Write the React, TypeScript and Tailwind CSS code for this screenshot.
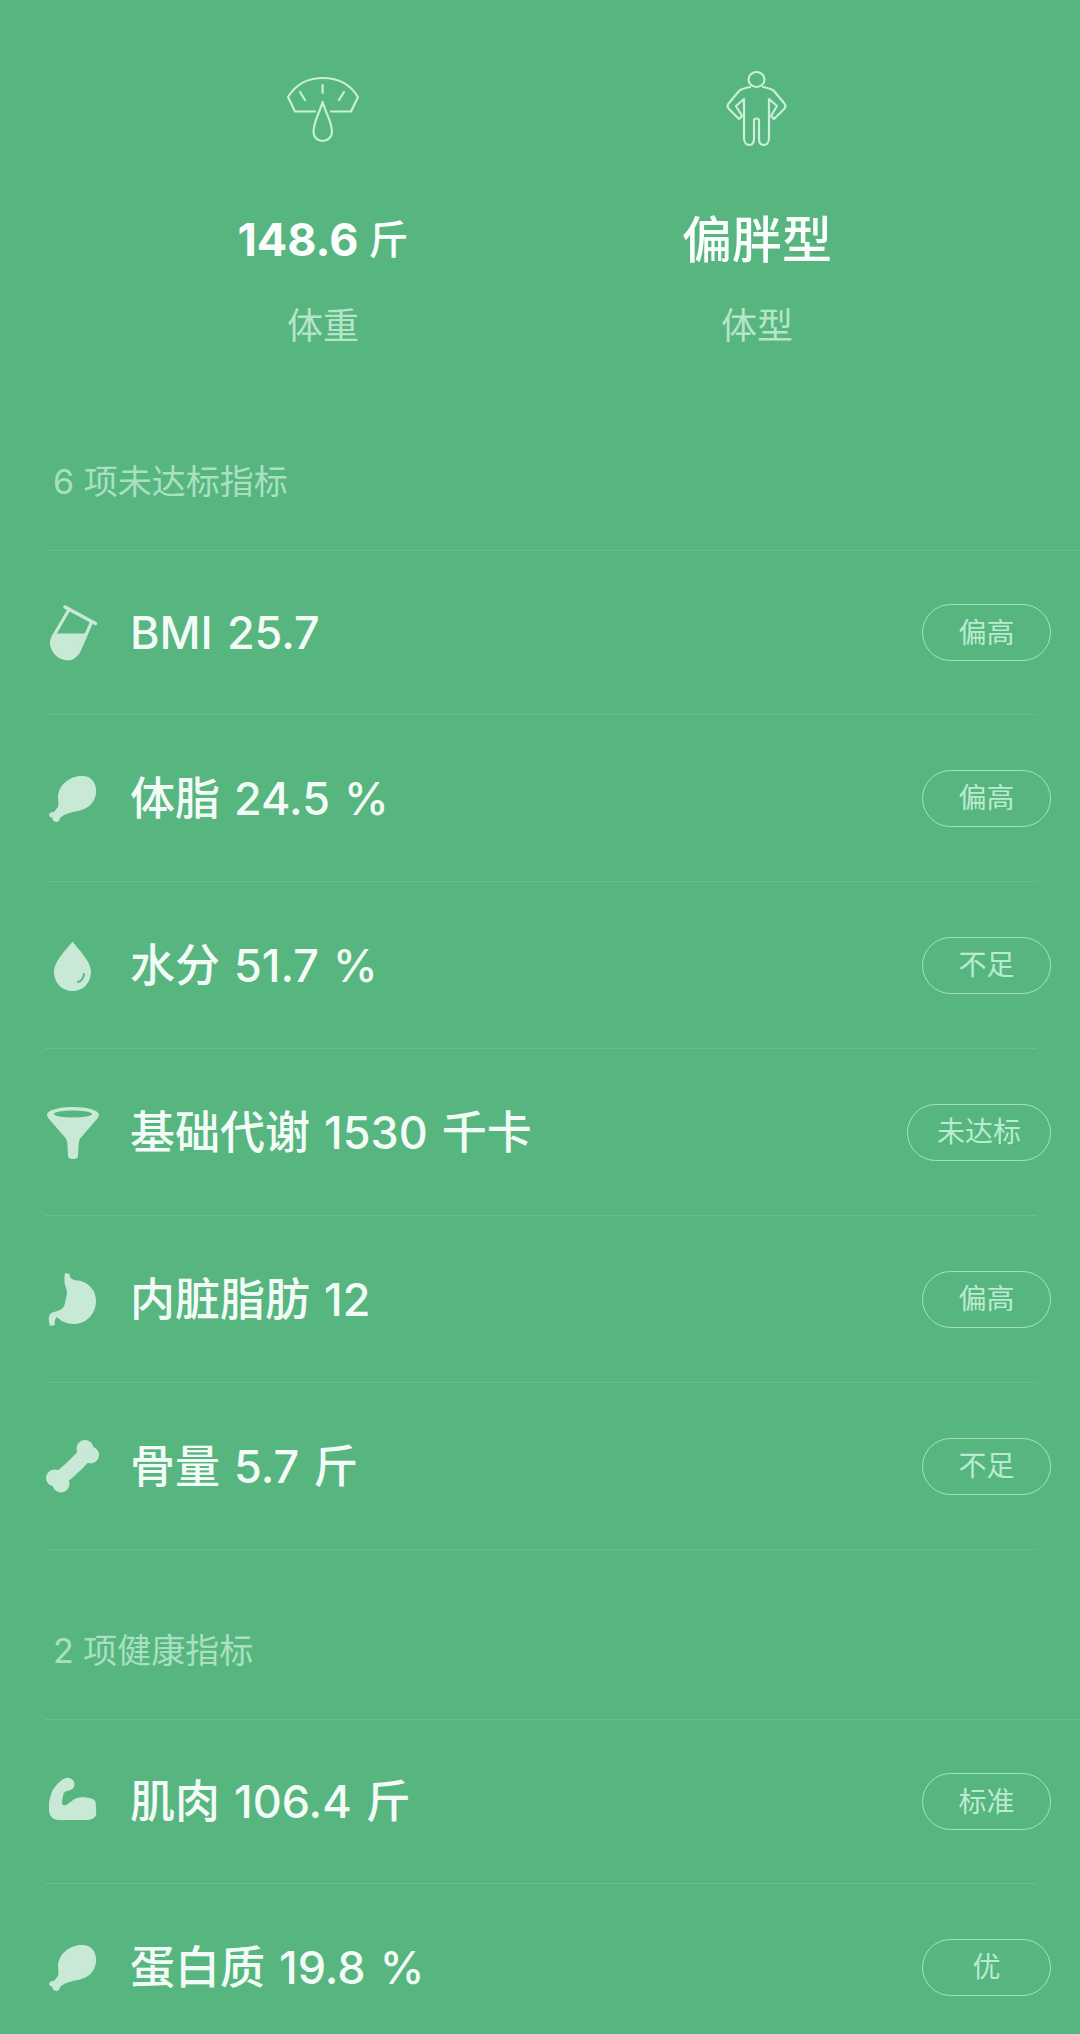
import type { ReactNode } from "react";

const iconClass = "w-[60px] h-[60px] flex-shrink-0";
const fill = "#c9e9d7";
const bg = "#57b57f";

const TubeIcon = () => (
  <svg viewBox="0 0 60 60" className={iconClass}>
    <path d="M20 4L50.5 20.5" stroke={fill} strokeWidth="3.5" strokeLinecap="round" />
    <path d="M24 6.5L8 34C4 42 9 53 20 55.5C27 57 32 52 34 48L47 18" fill="none" stroke={fill} strokeWidth="3.2" />
    <path d="M12 30.5H40.5L33 47C30 53 25 56 19 55C9 53 4 43 8 35Z" fill={fill} />
  </svg>
);

const DrumstickIcon = () => (
  <svg viewBox="0 0 60 60" className={iconClass}>
    <path
      d="M36 8C46 7 52 15 51 25C50 35 43 41 33 43C27 44 23 45 19 47L15 50C15 53 12 55 10 53.5C8 53 7 51 7.5 49.5C5 50 3 47 5 45C6 44 8 44 9 44L13 39C14 36 13 32 13 28C14 17 25 8 36 8Z"
      fill={fill}
    />
  </svg>
);

const DropIcon = () => (
  <svg viewBox="0 0 60 60" className={iconClass}>
    <path d="M27.5 6.5C33 14 46 26 46 37C46 48 38 56 27.5 56C17 56 9 48 9 37C9 26 22 14 27.5 6.5Z" fill={fill} />
    <path d="M39 39C38.5 43 36.5 46 33 47" fill="none" stroke={bg} strokeWidth="2" strokeLinecap="round" />
  </svg>
);

const FunnelIcon = () => (
  <svg viewBox="0 0 60 60" className={iconClass}>
    <path d="M2 13C2 8 14 5 28 5C42 5 54 8 54 13C54 14 53 15 52 17L35.5 36C34 38 33.5 41 33.5 44L33 54C33 56 31 57 28 57C25 57 23 56 23 54L22.5 44C22.5 41 22 38 20.5 36L4 17C3 15 2 14 2 13Z" fill={fill} />
    <ellipse cx="28" cy="12" rx="19" ry="3.5" fill={bg} />
  </svg>
);

const StomachIcon = () => (
  <svg viewBox="0 0 60 60" className={iconClass}>
    <path
      d="M20 4L25 5C24 7 25 9 27 10C30 12 33 11 36 12C45 15 51 22 51 32C51 45 41 55 29 55C21 55 16 52 12 48C10 50 9 53 10 56L5 57C3 50 3 44 9 43C14 42 19 40 20 34C21 28 23 24 21 19C19 14 19 9 20 4Z"
      fill={fill}
    />
  </svg>
);

const BoneIcon = () => (
  <svg viewBox="0 0 60 60" className={iconClass}>
    <path d="M42 16C33 28 24 35 12 45" fill="none" stroke={fill} strokeWidth="15" />
    <circle cx="40" cy="12.5" r="8.5" fill={fill} />
    <circle cx="45.5" cy="19" r="8.5" fill={fill} />
    <circle cx="9.5" cy="42" r="8.5" fill={fill} />
    <circle cx="16" cy="48" r="8.5" fill={fill} />
  </svg>
);

const MuscleIcon = () => (
  <svg viewBox="0 0 60 60" className={iconClass}>
    <path
      d="M4 32C5 24 7 18 10 15C13 11 17 7 21 6C26 5 30 9 29.5 13C29 16 27 18 24 18.5C21 19 19 20 18.5 22C18 25 17 28 17 31C17 33 19 34 21 33C25 31 28 27 32 26C36 25 38 25 41 25.5C45 26 50 27 50.5 30C51 34 51.5 39 51 43C50 46 46 48 41 48L14 48C8 48 4 44 4 38Z"
      fill={fill}
    />
  </svg>
);

const ScaleIcon = () => (
  <svg viewBox="0 0 80 72" className="w-[80px] h-[72px]" fill="none" stroke="#c9efd9" strokeWidth="2.2" strokeLinejoin="round" strokeLinecap="round">
    <path d="M32 38.5H12L5 24C13 11 26 5 40 5C54 5 67 11 75 24L68 38.5H48" />
    <path d="M39.6 12V20M17 19L22 27M61 19L56 27" />
    <path d="M39.6 29C36 41 30.5 49 30.5 59C30.5 64 34.5 68 39.6 68C44.7 68 49 64 49 59C49 49 43 41 39.6 29Z" />
  </svg>
);

const PersonIcon = () => (
  <svg viewBox="0 0 66 82" className="w-[66px] h-[82px]" fill="none" stroke="#c9efd9" strokeWidth="2.2" strokeLinejoin="round" strokeLinecap="round">
    <ellipse cx="32.5" cy="11.5" rx="8" ry="7.5" />
    <path d="M26 19C21 20 17 21 15 23L5 35C3 37 3 39 5 41L15 51L18 48L12 38L20 31V70C20 75 23 77 25.5 77C28 77 30 75 30 70V52C30 50 35 50 35 52V70C35 75 37 77 39.5 77C42 77 45 75 45 70V31L53 38L47 48L50 51L60 41C62 39 62 37 60 35L50 23C48 21 44 20 39 19" />
  </svg>
);

type Metric = { icon: ReactNode; label: string; tag: string };

const unmet: Metric[] = [
  { icon: <TubeIcon />, label: "BMI 25.7", tag: "偏高" },
  { icon: <DrumstickIcon />, label: "体脂 24.5 %", tag: "偏高" },
  { icon: <DropIcon />, label: "水分 51.7 %", tag: "不足" },
  { icon: <FunnelIcon />, label: "基础代谢 1530 千卡", tag: "未达标" },
  { icon: <StomachIcon />, label: "内脏脂肪 12", tag: "偏高" },
  { icon: <BoneIcon />, label: "骨量 5.7 斤", tag: "不足" },
];

const healthy: Metric[] = [
  { icon: <MuscleIcon />, label: "肌肉 106.4 斤", tag: "标准" },
  { icon: <DrumstickIcon />, label: "蛋白质 19.8 %", tag: "优" },
];

const MetricRow = ({ metric }: { metric: Metric }) => (
  <div className="h-[167px] first:h-[164px] flex flex-col">
    <div className="flex-1 flex items-center pl-[45px] pr-[29px]">
      {metric.icon}
      <span className="ml-[25px] text-[45px] font-medium leading-none text-[#f2fbf6] [word-spacing:2px]">
        {metric.label}
      </span>
      <span className="ml-auto min-w-[129px] h-[57px] px-[29px] flex items-center justify-center rounded-full border-[1.5px] border-[#a4e2bf] text-[28px] text-[#b9eccf]">
        {metric.tag}
      </span>
    </div>
    <div className="h-px w-[992px] ml-[45px] bg-[#69be8e]" />
  </div>
);

const Section = ({ title, items }: { title: string; items: Metric[] }) => (
  <section>
    <div className="pt-[80px] pl-[53px] h-[169px]">
      <h2 className="h-[40px] flex items-center text-[34px] text-[#a9e0c0]">{title}</h2>
    </div>
    <div className="h-px ml-[45px] bg-[#69be8e]" />
    <div>
      {items.map((m) => (
        <MetricRow key={m.label} metric={m} />
      ))}
    </div>
  </section>
);

export default function App() {
  return (
    <div
      lang="zh-CN"
      className="w-[1080px] h-[2034px] overflow-hidden bg-[#57b57f] font-['Inter','Noto_Sans_CJK_SC',sans-serif]"
    >
      <div className="h-[381px] flex justify-center">
        <div className="w-[434px] flex flex-col items-center">
          <div className="mt-[54px] h-[110px] flex items-center">
            <ScaleIcon />
          </div>
          <div className="mt-[46px] h-[60px] flex items-center text-[#fafefc] text-[45px] font-bold">
            148.6 <span className="ml-[10px] text-[40px] font-medium">斤</span>
          </div>
          <div className="mt-[31px] h-[50px] flex items-center text-[36px] text-[#b4e5c9]">体重</div>
        </div>
        <div className="w-[434px] flex flex-col items-center">
          <div className="mt-[54px] h-[110px] flex items-center">
            <PersonIcon />
          </div>
          <div className="mt-[46px] h-[60px] flex items-center text-[#fafefc] text-[50px] font-medium">偏胖型</div>
          <div className="mt-[31px] h-[50px] flex items-center text-[36px] text-[#b4e5c9]">体型</div>
        </div>
      </div>
      <Section title="6 项未达标指标" items={unmet} />
      <Section title="2 项健康指标" items={healthy} />
    </div>
  );
}
